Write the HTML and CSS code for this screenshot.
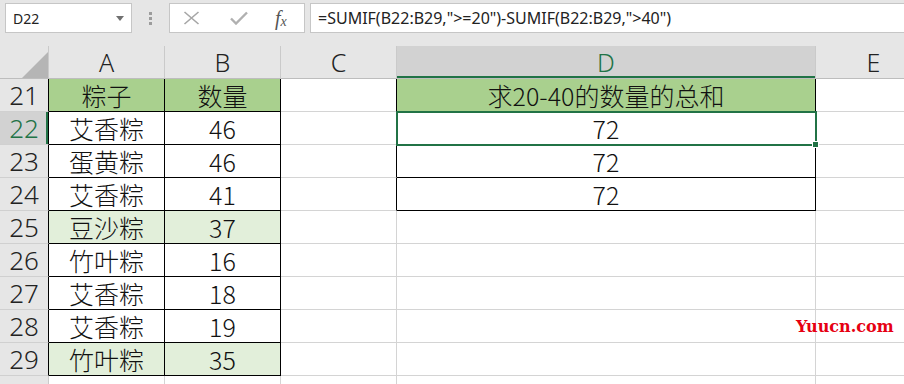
FILE: index.html
```html
<!DOCTYPE html>
<html lang="zh">
<head>
    <meta charset="UTF-8">
    <meta name="viewport" content="width=device-width, initial-scale=1.0">
    <title>SUMIF 区间求和</title>
    <link rel="stylesheet" href="styles.css">
</head>
<body>
<div class="app">
    <div class="toolbar">
        <div class="namebox">
            <span>D22</span>
            <svg width="8" height="5" viewBox="0 0 8 5"><path d="M0 0h8L4 5z" fill="#707070"/></svg>
        </div>
        <div class="grip"><i></i><i></i><i></i></div>
        <div class="fxbox">
            <svg class="ico" width="17" height="14" viewBox="0 0 17 14"><path d="M1.5 1l14 12M15.5 1l-14 12" stroke="#a6a6a6" stroke-width="1.6" fill="none"/></svg>
            <svg class="ico" width="18" height="14" viewBox="0 0 18 14"><path d="M1 7.5l5 5L17 1.5" stroke="#b0b0b0" stroke-width="2.4" fill="none"/></svg>
            <span class="fx">f<sub>x</sub></span>
        </div>
        <div class="formula">=SUMIF(B22:B29,"&gt;=20")-SUMIF(B22:B29,"&gt;40")</div>
    </div>

    <table class="sheet">
        <colgroup>
            <col class="c-rh">
            <col class="c-std">
            <col class="c-std">
            <col class="c-std">
            <col class="c-wide">
            <col class="c-std">
        </colgroup>
        <thead>
            <tr>
                <th class="corner"><span class="tri"></span></th>
                <th class="col">A</th>
                <th class="col">B</th>
                <th class="col">C</th>
                <th class="col act">D</th>
                <th class="col">E</th>
            </tr>
        </thead>
        <tbody>
            <tr>
                <th class="rh kr">21</th>
                <td class="k g">粽子</td><td class="k g">数量</td><td class="kr"></td>
                <td class="k g">求20-40的数量的总和</td><td></td>
            </tr>
            <tr>
                <th class="rh kr act">22</th>
                <td class="k">艾香粽</td><td class="k">46</td><td class="kr"></td>
                <td class="k sel">72<span class="handle"></span></td><td></td>
            </tr>
            <tr>
                <th class="rh kr">23</th>
                <td class="k">蛋黄粽</td><td class="k">46</td><td class="kr"></td>
                <td class="k">72</td><td></td>
            </tr>
            <tr>
                <th class="rh kr">24</th>
                <td class="k">艾香粽</td><td class="k">41</td><td class="kr"></td>
                <td class="k">72</td><td></td>
            </tr>
            <tr>
                <th class="rh kr">25</th>
                <td class="k lg">豆沙粽</td><td class="k lg">37</td><td></td><td></td><td></td>
            </tr>
            <tr>
                <th class="rh kr">26</th>
                <td class="k">竹叶粽</td><td class="k">16</td><td></td><td></td><td></td>
            </tr>
            <tr>
                <th class="rh kr">27</th>
                <td class="k">艾香粽</td><td class="k">18</td><td></td><td></td><td></td>
            </tr>
            <tr>
                <th class="rh kr">28</th>
                <td class="k">艾香粽</td><td class="k">19</td><td></td><td></td><td></td>
            </tr>
            <tr>
                <th class="rh kr">29</th>
                <td class="k lg">竹叶粽</td><td class="k lg">35</td><td></td><td></td><td></td>
            </tr>
            <tr>
                <th class="rh"></th>
                <td></td><td></td><td></td><td></td><td></td>
            </tr>
        </tbody>
    </table>

    <div class="watermark">Yuucn.com</div>
</div>
</body>
</html>
```

FILE: styles.css
```css
body {
    margin: 0;
    background-color: #fff;
    font-family: "Noto Sans", "Noto Sans CJK SC", sans-serif;
}

.app {
    position: relative;
    width: 904px;
    height: 384px;
    overflow: hidden;
}

/* formula bar */
.toolbar {
    height: 46px;
    box-sizing: border-box;
    padding: 3px 0 0 5px;
    background-color: #e6e6e6;
    display: flex;
    align-items: flex-start;
}

.namebox {
    width: 127px;
    height: 30px;
    box-sizing: border-box;
    border: 1px solid #c6c6c6;
    background-color: #fff;
    display: flex;
    align-items: center;
    justify-content: space-between;
    padding: 0 7px 0 7px;
    font-size: 14px;
    color: #222;
    flex-shrink: 0;
}

.grip {
    width: 37px;
    flex-shrink: 0;
    display: flex;
    flex-direction: column;
    align-items: center;
    gap: 2px;
    padding-top: 9px;
}

.grip i {
    display: block;
    width: 3px;
    height: 3px;
    background-color: #9c9c9c;
}

.fxbox {
    width: 136px;
    height: 30px;
    box-sizing: border-box;
    border: 1px solid #c6c6c6;
    background-color: #fff;
    flex-shrink: 0;
    display: flex;
    align-items: center;
    padding-left: 13px;
}

.fxbox .ico + .ico {
    margin-left: 30px;
}

.fx {
    margin-left: 27px;
    font-family: "Liberation Serif", serif;
    font-style: italic;
    font-size: 20px;
    color: #555;
    line-height: 1;
}

.fx sub {
    font-size: 14px;
    vertical-align: -1px;
}

.formula {
    margin-left: 5px;
    flex: 1;
    height: 30px;
    box-sizing: border-box;
    border: 1px solid #c6c6c6;
    border-right: none;
    background-color: #fff;
    padding-left: 7px;
    font-size: 16px;
    line-height: 28px;
    color: #222;
    white-space: nowrap;
}

/* grid */
.sheet {
    border-collapse: separate;
    border-spacing: 0;
    table-layout: fixed;
    width: 916px;
    font-family: "Noto Sans CJK SC", "Noto Sans", sans-serif;
}

.c-rh { width: 49px; }
.c-std { width: 116px; }
.c-wide { width: 419px; }

.sheet tr {
    height: 33px;
}

.sheet th,
.sheet td {
    padding: 0;
    box-sizing: border-box;
    white-space: nowrap;
}

.sheet td {
    border-right: 1px solid #d4d4d4;
    border-bottom: 1px solid #d4d4d4;
    text-align: center;
    vertical-align: bottom;
    font-size: 25px;
    font-weight: 300;
    line-height: 31px;
    color: #111;
}

.col,
.corner {
    background-color: #e6e6e6;
    border-right: 1px solid #cacaca;
    border-bottom: 1px solid #bdbdbd;
    font-family: "Noto Sans", sans-serif;
    font-weight: 300;
    font-size: 25px;
    color: #222;
    vertical-align: bottom;
    line-height: 31px;
}

.corner {
    text-align: right;
    padding: 0 3px 3px 0;
    line-height: 0;
}

.tri {
    display: inline-block;
    width: 0;
    height: 0;
    border-left: 26px solid transparent;
    border-bottom: 26px solid #b5b5b5;
}

.col.act {
    background-color: #d2d2d2;
    color: #217346;
    box-shadow: inset 0 -2px #217346;
}

.rh {
    background-color: #e6e6e6;
    border-right: 1px solid #cacaca;
    border-bottom: 1px solid #d0d0d0;
    font-family: "Noto Sans", sans-serif;
    font-weight: 300;
    font-size: 26px;
    color: #222;
    text-align: center;
    vertical-align: bottom;
    line-height: 32px;
}

.rh.act {
    background-color: #d2d2d2;
    color: #217346;
    box-shadow: inset -2px 0 #217346;
}

.sheet .kr {
    border-right-color: #000;
}

.sheet td.k {
    border-right-color: #000;
    border-bottom-color: #000;
}

.g {
    background-color: #a9d08e;
}

.lg {
    background-color: #e2efda;
}

.sel {
    position: relative;
    outline: 2px solid #217346;
    outline-offset: -1px;
}

.handle {
    position: absolute;
    right: -4px;
    bottom: -4px;
    width: 5px;
    height: 5px;
    background-color: #217346;
    border: 1px solid #fff;
    z-index: 2;
}

.watermark {
    position: absolute;
    left: 796px;
    top: 317px;
    font-family: "DejaVu Serif", serif;
    font-weight: bold;
    font-size: 16px;
    color: #e60012;
    white-space: nowrap;
}
```
